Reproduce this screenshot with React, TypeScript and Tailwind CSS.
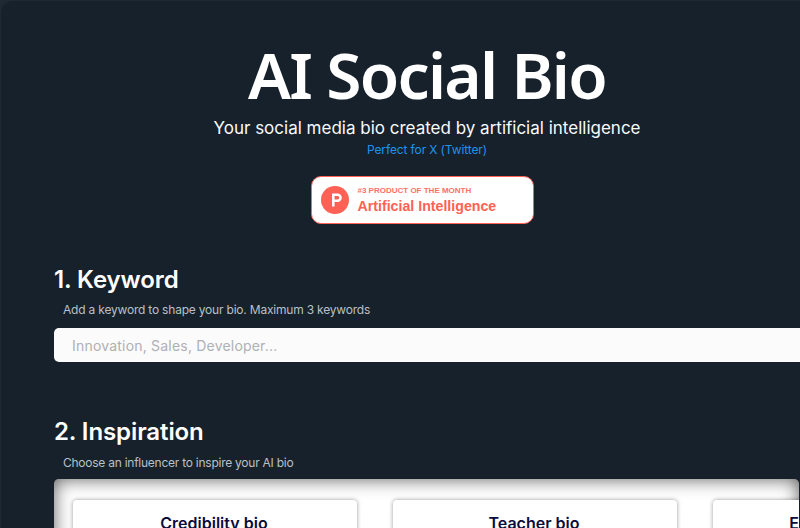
export default function App() {
  return (
    <div className="w-[800px] h-[528px] overflow-hidden bg-[#1e2933]">
      <div className="h-[528px] mt-px ml-px bg-[#17212b] rounded-tl-[12px] pl-[53px] font-['Inter',sans-serif] text-white overflow-hidden">
        <div className="flex flex-col items-center w-[746px]">
          <h1 className="mt-[35px] text-[64px] leading-[78px] tracking-[-1.7px] font-semibold font-['Noto_Sans',sans-serif]">AI Social Bio</h1>
          <p className="mt-[2px] text-[17px] leading-[24px] text-[#f8fafc]">Your social media bio created by artificial intelligence</p>
          <p className="mt-[2px] text-[12px] leading-[16px] tracking-[-0.12px] text-[#1d93ee]">Perfect for X (Twitter)</p>
          <div className="mt-[18px] mr-[10px] w-[223px] h-[48px] bg-white border border-[#ff6154] rounded-[10px] flex items-center pl-[9px] font-['Liberation_Sans',sans-serif]">
            <svg width="28" height="28" viewBox="0 0 28 28" className="shrink-0">
              <circle cx="14" cy="14" r="14" fill="#ff6154" />
              <path d="M11 7.500h5.600a4.200 4.200 0 0 1 0 8.400H13.600v4.600H11zM13.600 10v3.400h3a1.700 1.700 0 0 0 0-3.400z" fill="#fff" />
            </svg>
            <div className="ml-[9px] flex flex-col text-[#ff6154]">
              <span className="text-[8px] leading-[10px] font-bold opacity-90">#3 PRODUCT OF THE MONTH</span>
              <span className="mt-[2px] text-[14.2px] leading-[16px] font-bold">Artificial Intelligence</span>
            </div>
          </div>
        </div>
        <h2 className="mt-[40px] text-[24px] leading-[32px] font-semibold tracking-[-0.1px]">1. Keyword</h2>
        <p className="mt-[5px] ml-[9px] text-[12px] leading-[18px] tracking-[-0.2px] text-[#b9c0c8]">Add a keyword to shape your bio. Maximum 3 keywords</p>
        <div className="mt-[9px] w-[760px] h-[34px] bg-[#fbfbfb] rounded-[5px] flex items-center pl-[18px] text-[14px] tracking-[0.2px] text-[#aeb0b4]">Innovation, Sales, Developer...</div>
        <h2 className="mt-[54px] text-[24px] leading-[32px] font-semibold tracking-[-0.1px]">2. Inspiration</h2>
        <p className="mt-[6px] ml-[9px] text-[12px] leading-[18px] tracking-[-0.25px] text-[#b9c0c8]">Choose an influencer to inspire your AI bio</p>
        <div className="mt-[7px] w-[745px] h-[200px] bg-white rounded-[5px] shadow-[inset_0_0_18px_rgba(0,0,0,0.65)] pt-[21px] pl-[19px] flex gap-[36px] overflow-hidden">
          {["Credibility bio", "Teacher bio", "Entrepreneur bio"].map((t) => (
            <div key={t} className="w-[284px] shrink-0 h-[160px] bg-white rounded-[4px] shadow-[0_0_4px_rgba(0,0,0,0.4)] pt-[11px] pr-[2px] text-center text-[16px] leading-[24px] font-semibold text-[#0b0b3b]">{t}</div>
          ))}
        </div>
      </div>
    </div>
  );
}
